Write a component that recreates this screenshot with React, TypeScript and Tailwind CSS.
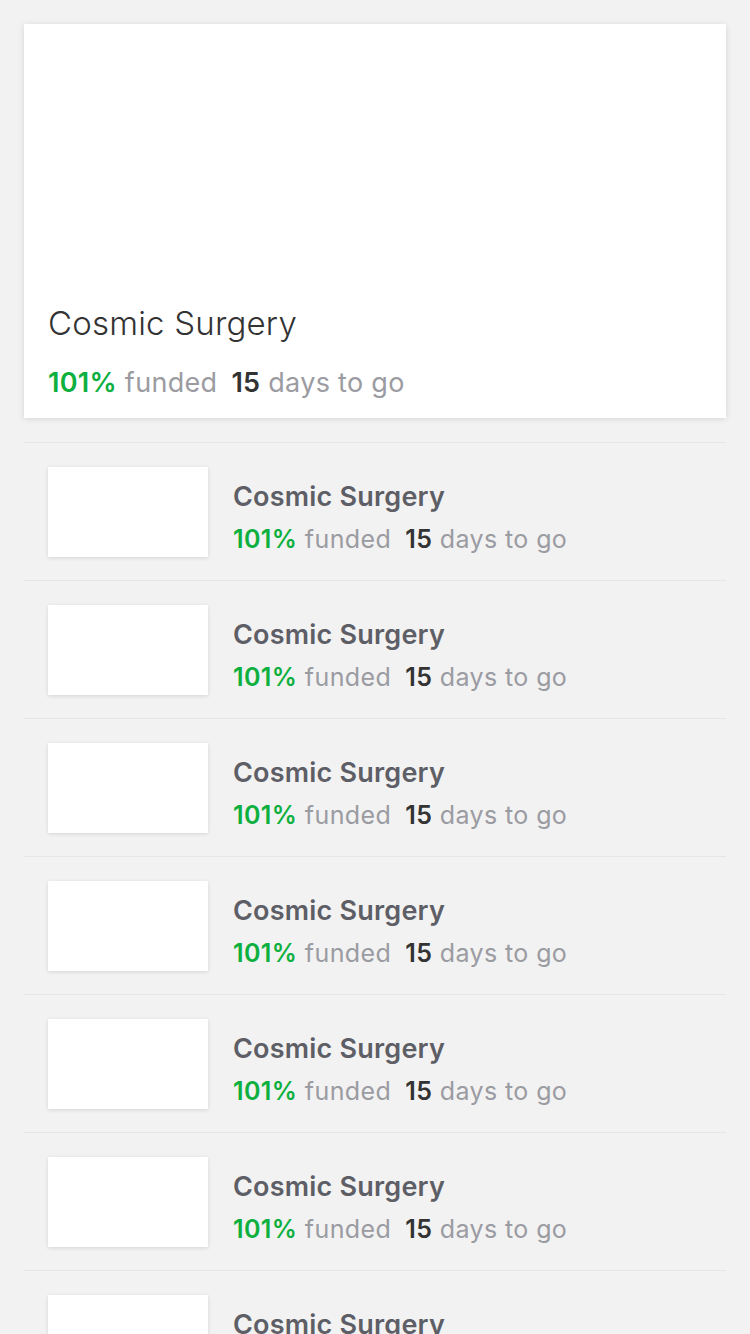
const items = Array.from({ length: 7 }, (_, i) => ({ id: i, name: 'Cosmic Surgery', funded: 101, days: 15 }));

function Stats({ funded, days, big }: { funded: number; days: number; big?: boolean }) {
  return (
    <p className={big ? 'text-[27px] leading-[32px] tracking-[0.3px]' : 'text-[25px] leading-[30px] tracking-[0.4px]'}>
      <span className="font-semibold text-[#0db03f]">{funded}%</span>
      <span className="text-[#9b9ba2]"> funded</span>
      <span className="ml-[14px] font-semibold text-[#333333]">{days}</span>
      <span className="text-[#9b9ba2]"> days to go</span>
    </p>
  );
}

export default function App() {
  return (
    <div className="h-[1334px] overflow-hidden bg-[#f2f2f2] px-6 pt-6" style={{ fontFamily: 'Inter, "Noto Sans", sans-serif' }}>
      <div className="bg-white shadow-[0_1px_6px_rgba(0,0,0,0.12)] h-[394px] flex flex-col justify-end px-6 pb-[19px]">
        <h1 className="text-[33px] leading-[40px] tracking-[0.2px] font-light text-[#333333] mb-[24px]">Cosmic Surgery</h1>
        <Stats funded={101} days={15} big />
      </div>
      <div className="mt-6 border-t border-[#e6e6e6]">
        {items.map((item) => (
          <div key={item.id} className="flex items-start pt-6 pb-[23px] border-b border-[#e6e6e6] px-6">
            <div className="w-[160px] h-[90px] bg-white shadow-[0_1px_4px_rgba(0,0,0,0.12)] shrink-0" />
            <div className="ml-[25px] mt-[15px] flex flex-col gap-[12px]">
              <h2 className="text-[27px] leading-[30px] tracking-[0.2px] font-semibold text-[#5e5e66]">{item.name}</h2>
              <Stats funded={item.funded} days={item.days} />
            </div>
          </div>
        ))}
      </div>
    </div>
  );
}
